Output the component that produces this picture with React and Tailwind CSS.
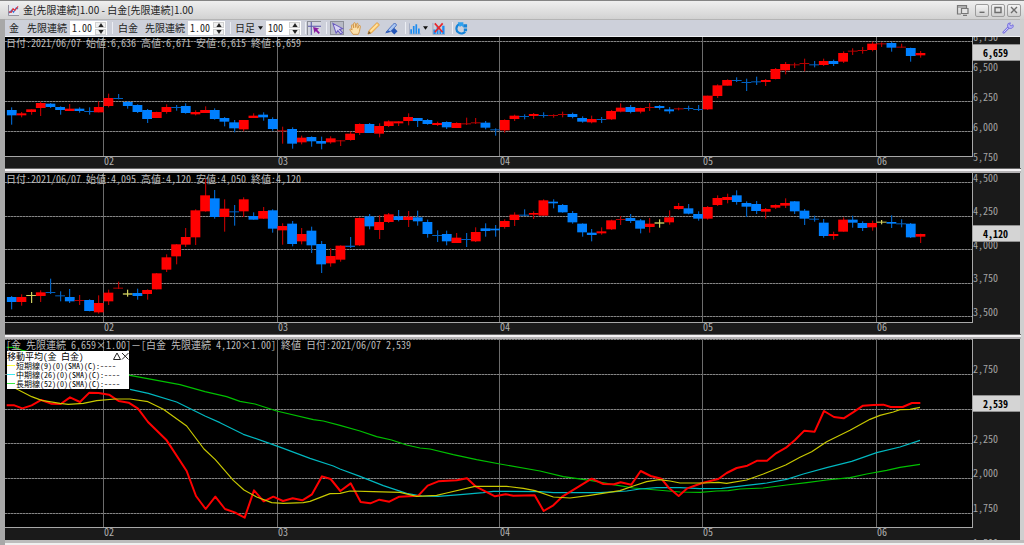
import { useState } from 'react';

const STEP = 29; // horizontal distance between two sessions, in thirds of a pixel
const FIRST = 35;

const months = [
  { label: '02', x: 103 },
  { label: '03', x: 277 },
  { label: '04', x: 499 },
  { label: '05', x: 702 },
  { label: '06', x: 876 },
];

// one session per entry: direction, high, body top, body bottom, low (thirds of a pixel)
const goldCandles = `d 220 228 244 272,u 234 238 244 250,u 226 226 234 242,u 203 207 222 246,d 207 209 219 222,
d 217 219 228 242,u 210 224 231 231,d 220 224 231 236,d 220 231 233 242,u 202 219 235 235,
u 179 192 216 220,d 180 192 194 196,d 201 204 216 224,d 211 213 234 237,d 225 228 255 267,
u 233 234 252 252,u 211 219 234 239,d 213 219 221 230,d 208 216 237 239,u 229 234 241 244,
u 217 228 237 237,d 223 228 255 257,d 249 252 263 277,d 258 265 283 295,u 258 258 286 292,
u 238 245 252 252,d 235 242 250 260,d 250 255 285 290,u 278 289 291 329,d 280 285 329 344,
u 305 311 325 331,d 307 309 322 338,d 308 321 329 346,u 307 313 325 329,u 318 319 321 336,
u 293 299 318 320,u 268 270 297 303,d 267 270 297 297,u 268 276 299 310,u 259 262 276 279,
u 262 262 268 276,u 238 249 261 274,d 252 252 261 279,d 255 258 270 272,u 263 267 273 276,
d 262 264 280 285,u 265 267 282 282,u 251 268 270 273,u 252 265 267 270,d 261 266 281 286,
d 283 286 289 305,u 256 258 289 296,u 242 245 255 261,d 241 246 248 256,u 237 240 246 255,
d 235 243 245 251,u 241 243 245 251,u 233 240 242 250,d 236 240 249 253,d 247 252 263 266,
u 245 255 265 268,d 249 255 258 267,u 228 231 256 258,u 208 221 233 235,d 213 219 234 238,
u 221 222 233 238,u 207 219 221 231,d 213 216 222 227,d 219 226 232 239,u 221 223 226 229,
d 215 222 224 230,d 213 225 227 231,u 185 185 226 228,u 151 154 186 192,u 136 138 155 155,
d 130 138 140 144,d 134 144 147 171,d 128 142 144 153,u 135 138 144 156,u 102 105 135 136,
u 84 90 109 121,u 86 91 93 102,u 74 87 90 112,d 81 91 93 100,u 74 81 93 96,
d 77 81 90 96,u 52 57 83 87,u 43 50 52 63,u 39 48 51 59,u 23 29 48 52,
u 25 28 31 39,d 24 27 41 53,u 29 38 40 41,d 41 42 66 83,u 51 57 64 71`;

const platinumCandles = `d 384 387 402 424,u 379 387 402 413,n 372 381 383 405,u 367 373 384 402,d 332 372 375 378,
d 370 382 385 400,d 363 387 400 405,u 381 396 399 411,d 394 396 429 430,u 382 405 433 437,
u 365 374 400 411,u 341 359 361 363,n 365 376 380 386,d 362 375 384 395,u 364 366 378 395,
u 315 316 364 364,u 259 268 305 312,u 228 229 265 289,u 180 207 230 237,u 124 127 208 231,
u 33 82 130 131,d 66 91 147 152,u 94 122 147 191,d 111 130 133 173,u 88 94 130 147,
d 133 144 155 155,u 117 129 152 153,d 124 127 182 194,u 166 174 187 230,d 159 167 228 235,
u 180 198 220 229,d 176 188 232 255,d 219 228 289 315,u 241 264 286 296,u 232 233 275 281,
d 207 233 237 240,u 148 150 232 234,d 138 145 175 184,u 142 162 186 213,u 135 139 162 165,
d 126 145 156 160,u 129 146 156 177,d 128 148 160 173,d 155 162 198 209,d 187 201 203 222,
d 188 198 220 232,u 195 209 225 225,d 195 213 215 237,u 178 192 220 222,d 166 181 189 206,
d 171 182 187 206,u 154 159 177 182,u 133 140 156 174,d 124 140 143 144,u 130 135 140 153,
u 94 97 143 143,d 94 101 106 121,d 108 111 133 134,d 129 135 163 167,d 166 167 193 206,
d 183 194 201 220,u 178 190 196 200,u 155 157 184 186,u 144 153 156 171,d 138 150 159 165,
d 153 157 182 196,u 150 167 177 194,n 154 163 167 179,u 127 148 163 170,u 105 114 123 125,
d 108 121 137 139,d 130 138 152 158,u 114 117 152 155,u 82 90 111 114,u 77 87 96 106,
d 67 82 102 110,d 100 105 116 147,d 99 108 129 138,u 120 123 131 152,u 109 111 119 123,
u 91 105 113 120,d 99 100 130 138,d 123 128 152 171,d 143 152 155 161,d 153 164 204 209,
u 191 198 204 215,u 148 155 191 191,d 143 155 164 179,d 160 165 180 189,u 158 165 178 188,
n 156 161 164 169,d 142 162 167 180,d 154 166 168 178,d 165 167 208 210,u 197 198 206 225`;

const spreadLines = [
  {
    color: '#00c000',
    width: 1.2,
    points:
      '20,40 45,40 67,49 390,124 540,152 615,173 680,188 720,202 765,210 830,231 940,257 970,261 1020,274 1080,291 1130,308 1175,318 1220,333 1260,342 1290,345 1360,362 1430,377 1500,390 1620,411 1690,428 1775,440 1840,452 1900,462 2040,474 2100,475 2150,471 2185,470 2220,465 2290,462 2360,453 2420,446 2480,438 2550,431 2600,420 2660,409 2700,400 2760,391',
  },
  {
    color: '#00b8c0',
    width: 1.2,
    points:
      '390,166 445,178 530,204 615,246 660,266 730,301 800,325 850,343 930,373 1000,396 1020,405 1080,427 1150,455 1220,478 1265,486 1315,487 1390,481 1450,476 1480,472 1620,473 1660,476 1800,476 1880,471 1920,465 1970,461 2040,461 2100,464 2165,463 2240,454 2300,447 2360,436 2410,420 2480,401 2555,382 2630,356 2700,339 2760,319',
  },
  {
    color: '#ff0000',
    width: 2,
    points:
      '20,214 43,214 67,223 95,214 124,198 153,209 182,210 210,190 240,204 268,176 296,177 327,182 356,201 386,206 414,224 444,264 500,319 560,411 588,486 617,525 646,488 675,525 704,535 734,551 762,469 791,502 820,488 849,501 878,493 907,499 936,481 966,427 992,435 1021,471 1052,448 1082,504 1111,508 1138,497 1168,503 1198,488 1255,485 1283,455 1315,442 1370,439 1401,433 1428,458 1485,487 1517,481 1540,485 1604,484 1631,531 1660,514 1688,487 1775,434 1810,450 1842,451 1862,445 1894,452 1922,411 1952,426 1984,434 2007,462 2036,486 2062,463 2090,453 2107,447 2155,435 2180,417 2210,402 2242,395 2272,380 2301,380 2328,358 2358,341 2385,318 2413,290 2444,293 2472,231 2502,249 2531,253 2558,236 2589,215 2620,213 2650,212 2672,219 2708,219 2736,207 2761,207',
  },
  {
    color: '#c8c800',
    width: 1.2,
    points:
      '30,154 50,165 95,188 125,199 180,208 205,211 250,208 290,200 345,195 390,195 444,203 490,226 560,276 612,345 646,377 700,439 732,468 770,489 815,506 850,508 910,506 930,502 990,479 1020,478 1050,471 1120,473 1200,475 1250,487 1310,484 1340,477 1425,457 1520,457 1570,463 1605,470 1660,489 1710,492 1770,484 1860,470 1900,456 1940,443 1978,437 2010,441 2040,447 2110,447 2155,445 2180,448 2240,438 2290,420 2357,393 2400,370 2435,353 2480,323 2550,289 2610,256 2640,244 2680,234 2700,227 2730,226 2760,220',
  },
];

const bodyColors = { u: '#ff0000', d: '#0080ff', n: '#e6e67a' };
const wickColors = { u: '#b40000', d: '#0060c0', n: '#d0d060' };

const mono = "font-['Noto_Sans_Mono_CJK_JP','Noto_Sans_CJK_JP',monospace]";

function Candles({ data, offset }) {
  return data.split(',').map((row, i) => {
    const [kind, ...rest] = row.trim().split(' ');
    const [high, top, bottom, low] = rest.map((v) => (Number(v) - offset) / 3);
    const cx = (FIRST + STEP * i) / 3;
    const thin = bottom - top < 1.4;
    const wickX = Math.floor(cx);
    return (
      <g key={i}>
        <rect x={wickX} y={high} width="1.2" height={Math.max(low - high, 1)} fill={wickColors[kind]} />
        <rect
          x={cx - 4.8}
          y={top}
          width="9.8"
          height={Math.max(bottom - top, 1)}
          fill={thin ? wickColors[kind] : bodyColors[kind]}
        />
      </g>
    );
  });
}

function ChartPanel({ title, svgHeight, sizeClass, stripClass, scale, current, children, overlay }) {
  // scale: top grid value and its y, pixels per 250
  const yOf = (value) => scale.y + ((scale.value - value) / 250) * scale.step;
  const values = Array.from({ length: scale.count }, (_, i) => scale.value - i * 250);
  // labels above the panel or behind the current price are left out
  const labels = values.filter((v) => yOf(v) > 2 && Math.abs(yOf(v) - 5 - yOf(current)) > 3);

  return (
    <section className="flex bg-[#1a1a1a]">
      <div className="min-w-0 flex-1">
        <div className="relative border-b border-r border-[#a8a8a8] bg-black">
          <svg viewBox={`5 0 967 ${svgHeight}`} preserveAspectRatio="none" className={`block w-full ${sizeClass}`}>
            {values.map((v) => (
              <g key={v} stroke="#4a4a4a">
                <path d={`M5 ${Math.floor(yOf(v)) + 0.5}H972`} />
                <path d={`M5 ${Math.floor(yOf(v)) + 0.5}H972`} stroke="#858585" strokeDasharray="2 1" />
              </g>
            ))}
            {months.map((m) => (
              <line key={m.label} x1={m.x + 0.5} x2={m.x + 0.5} y1="0" y2={svgHeight} stroke="#6c6c6c" />
            ))}
            {children}
          </svg>
          <h2 className="absolute left-px top-0 whitespace-pre text-[10px] leading-[12px] text-[#bdbdbd]">{title}</h2>
          {overlay}
        </div>
        <div className={`relative ${stripClass}`}>
          {months.map((m) => (
            <span
              key={m.label}
              className="absolute -top-px text-[10px] leading-[10px] text-[#b0b0b0]"
              style={{ left: `${((m.x - 4) / 968) * 100}%` }}
            >
              {m.label}
            </span>
          ))}
        </div>
      </div>
      <div className="relative w-[47px] overflow-hidden text-[10px] leading-[10px]">
        {labels.map((v) => (
          <span key={v} className="absolute left-0 text-[#a4a4a4]" style={{ top: Math.round(yOf(v)) - 10 }}>
            {v.toLocaleString('en-US')}
          </span>
        ))}
        <strong
          className="absolute left-0 w-full border-y border-[#909090] bg-[#d4d4d4] pl-[10px] leading-[15px] text-black"
          style={{ top: Math.round(yOf(current)) - 9 }}
        >
          {current.toLocaleString('en-US')}
        </strong>
      </div>
    </section>
  );
}

function Divider() {
  return (
    <div className="-mr-px">
      <div className="h-px bg-[#666]"></div>
      <div className="h-[2px] bg-[#f4f2f4]"></div>
      <div className="h-[2px] bg-[#b4b2b4]"></div>
    </div>
  );
}

function NumberBox({ label, value, step, onChange, widthClass }) {
  const change = (dir) => onChange((Number(value) + dir * step).toFixed(step < 1 ? 2 : 0));
  return (
    <div className="flex h-[14px] bg-white">
      <input
        aria-label={label}
        value={value}
        onChange={(e) => onChange(e.target.value)}
        className={`h-[13px] bg-white pl-[2px] text-[10px] leading-[13px] text-[#222] outline-none ${widthClass}`}
      />
      <div className="flex w-3 flex-col gap-px py-px pr-px">
        <button
          type="button"
          aria-label={`${label} +`}
          onClick={() => change(1)}
          className="flex flex-1 items-center justify-center border border-[#d0d0d0] bg-[#f0f0f0]"
        >
          <svg viewBox="0 0 6 4" className="h-[4px] w-[6px] shrink-0"><path d="M3 0 5.6 4H.4z" fill="#222" /></svg>
        </button>
        <button
          type="button"
          aria-label={`${label} -`}
          onClick={() => change(-1)}
          className="flex flex-1 items-center justify-center border border-[#d0d0d0] bg-[#f0f0f0]"
        >
          <svg viewBox="0 0 6 4" className="h-[4px] w-[6px] shrink-0"><path d="M3 4 .4 0h5.2z" fill="#222" /></svg>
        </button>
      </div>
    </div>
  );
}

function Separator() {
  return <div className="h-3 w-px bg-[#eceef4]"></div>;
}

function ToolButton({ label, pressed, children }) {
  return (
    <button
      type="button"
      aria-label={label}
      aria-pressed={pressed}
      className={`flex h-[14px] w-[14px] items-center justify-center ${
        pressed ? 'border border-[#8c8f98] bg-[#b8bbc6]' : ''
      }`}
    >
      <svg viewBox="0 0 14 14" className="h-[13px] w-[13px] shrink-0">{children}</svg>
    </button>
  );
}

function Toolbar() {
  const [goldRate, setGoldRate] = useState('1.00');
  const [platinumRate, setPlatinumRate] = useState('1.00');
  const [count, setCount] = useState('100');

  return (
    <div className="flex h-[17px] items-center border-t border-[#b4b4b4] bg-[#cdd0da] pl-1 pr-[6px] text-[10px] leading-none text-[#222]">
      <span>金</span>
      <span className="ml-2">先限連続</span>
      <div className="ml-[3px]">
        <NumberBox label="金 倍率" value={goldRate} step={0.01} onChange={setGoldRate} widthClass="w-[25px]" />
      </div>
      <div className="ml-[5px] mr-[5px]"><Separator /></div>
      <span>白金</span>
      <span className="ml-[7px]">先限連続</span>
      <div className="ml-[3px]">
        <NumberBox label="白金 倍率" value={platinumRate} step={0.01} onChange={setPlatinumRate} widthClass="w-[25px]" />
      </div>
      <div className="ml-[5px] mr-1"><Separator /></div>
      <button type="button" className="flex items-center gap-[3px]">
        日足
        <svg viewBox="0 0 6 4" className="h-[4px] w-[5px]"><path d="M0 0h6L3 4z" fill="#111" /></svg>
      </button>
      <div className="ml-[3px]">
        <NumberBox label="本数" value={count} step={1} onChange={setCount} widthClass="w-[23px]" />
      </div>
      <div className="ml-1 mr-px"><Separator /></div>
      <ToolButton label="十字カーソル" pressed>
        <path d="M0 0h14v14H0z" fill="#d4d6e0" />
        <path d="M3.500 0v14M0 4.500h14" stroke="#5454a8" strokeWidth="1.100" />
        <path d="M5.500 5.500 12 7l-2.200 1.400 3 3.200-1.300 1.300-3.200-3.100L7 12z" fill="#8a1aa0" />
      </ToolButton>
      <div className="ml-[5px] mr-[3px]"><Separator /></div>
      <ToolButton label="選択" pressed>
        <path d="M2 1.500 12.500 7 9.200 8 12.500 11.500 10.500 13 7.400 9.300 5.500 12z" fill="#d9d4f4" stroke="#6a5cc0" strokeWidth="1.100" />
      </ToolButton>
      <div className="ml-1">
        <ToolButton label="移動">
          <path
            d="M4.300 13.300C3.300 11.300 1.600 10 .8 8.400c0-1.200 1.600-1 2.500.3L2.600 3.800c.1-1.300 1.500-1.200 1.800 0l.7 2.500-.2-4.600C5.100.5 6.600.5 6.900 1.700l.4 4.300.8-4c.4-1.100 1.700-.8 1.700.4L9.400 6.800l1.400-2.700c.7-.8 1.800-.2 1.500.9l-1.100 5.200c-.3 1.300-.8 2.200-1.200 3.100z"
            fill="#fbe0ac"
            stroke="#cf8e3c"
            strokeWidth=".9"
          />
        </ToolButton>
      </div>
      <div className="ml-1">
        <ToolButton label="鉛筆">
          <path d="M1 13 2.200 9.200 10.200 1.200C11.300.4 13.600 2.400 12.800 3.800L4.800 11.800z" fill="#ffd27a" stroke="#e08f2a" strokeWidth=".9" />
          <path d="M1 13 2 9.800 4.300 12z" fill="#6e5a3c" />
          <path d="M4 9.500 11 2.600" stroke="#fff0c4" />
        </ToolButton>
      </div>
      <div className="ml-1">
        <ToolButton label="ペン">
          <path d="M1 11 8.600 2.600C10 .8 13 1.600 12 4L5.600 10.500z" fill="#a9c6f2" stroke="#3a62b8" strokeWidth=".9" />
          <path d="M0 12.500 4 9l1.500 1.500zM10 6.500l3.500 3.500-3.500 3.500L6.500 10z" fill="#2456b8" />
        </ToolButton>
      </div>
      <div className="ml-[7px] mr-[3px]"><Separator /></div>
      <button type="button" aria-label="指標" className="flex items-center gap-[2px]">
        <svg viewBox="0 0 14 14" className="h-[13px] w-3">
          <path d="M.5 1v12.500H14" fill="none" stroke="#9aa6c0" />
          <path d="M1.500 8h2v5h-2zM4.500 4h2v9h-2zM7.500 2h2v11h-2zM10.500 7h2v6h-2z" fill="#1e8cf0" />
        </svg>
        <svg viewBox="0 0 6 4" className="h-[4px] w-[5px]"><path d="M0 0h6L3 4z" fill="#111" /></svg>
      </button>
      <div className="ml-[3px]">
        <ToolButton label="指標削除">
          <path d="M1 1v12.500H14" fill="none" stroke="#9aa6c0" />
          <path d="M1.500 8h2.500v5H1.500zM5 5h2v8H5zM8 9h2v4H8zM11 4h2.500v9H11z" fill="#1e8cf0" />
          <path d="M3 1.500 11.500 11M11.500 1.500 3 11" stroke="#e8262c" strokeWidth="1.800" />
        </ToolButton>
      </div>
      <div className="ml-[7px] mr-px"><Separator /></div>
      <ToolButton label="更新">
        <path d="M5.500 2.200C.8 3.200.2 9.500 4 11.500c2.500 1.500 5.500.8 7-1" fill="none" stroke="#1583d8" strokeWidth="2.300" />
        <path d="M3 .2h6v5.500L7 4 5.200 5.500z" fill="#2ea0ee" />
        <path d="M9 2.500h4V6H9zM9.500 7H13v3H9.500z" fill="#1583d8" />
      </ToolButton>
      <button type="button" aria-label="設定" className="ml-auto">
        <svg viewBox="0 0 14 14" className="h-3 w-3">
          <path d="M2 12 8 6" stroke="#7b74e0" strokeWidth="3" strokeLinecap="round" />
          <path d="M2.300 11.700 7.500 6.500" stroke="#dcdcff" strokeWidth="1" strokeLinecap="round" />
          <path d="M12.800 3.200A3.300 3.300 0 1 1 9.800 1L9 3.300l1.500 1.500z" fill="#b9b6f6" stroke="#6f68dc" strokeWidth="1" />
        </svg>
      </button>
    </div>
  );
}

function WindowButton({ label, children }) {
  return (
    <button
      type="button"
      aria-label={label}
      className="flex h-[13px] w-[14px] items-center justify-center rounded-xs border border-[#9c9c9c] bg-linear-to-b from-[#f4f4f4] to-[#cfcfcf]"
    >
      <svg viewBox="0 0 8 8" className="h-2 w-2" fill="none" stroke="#6c6c6c" strokeWidth="1.400">{children}</svg>
    </button>
  );
}

function TitleBar() {
  return (
    <header className="flex h-[19px] items-center border-t border-[#848484] bg-linear-to-b from-[#efefef] to-[#d2d2d2] pl-2 pr-[3px]">
      <svg viewBox="0 0 12 12" className="h-[11px] w-[11px]">
        <rect width="12" height="12" fill="#e4e6ee" />
        <path d="M.5 0v11.500H12" fill="none" stroke="#8a8a96" />
        <path d="M1 9 4 5.500 6 8l3-5 2 1.500" fill="none" stroke="#3878d8" strokeWidth="1.200" />
        <path d="M1 7.500 3.500 8 5.500 4l2 2L11 1.500" fill="none" stroke="#e03038" strokeWidth="1.200" />
      </svg>
      <h1 className="ml-1 text-[10px] leading-none text-[#222] font-['Noto_Sans_CJK_JP',sans-serif]">
        金[先限連続]1.00 - 白金[先限連続]1.00
      </h1>
      <div className="ml-auto flex items-center gap-[2px]">
        <button type="button" aria-label="別ウィンドウ" className="mr-1">
          <svg viewBox="0 0 13 12" className="h-3 w-[13px]" fill="none" stroke="#777" strokeWidth="1.200">
            <path d="M5 10H1.500V1.500h9V4M1.500 3h9" />
            <path d="M5.500 4.500h6.500v5H5.500zM7 11.300h4" fill="#e4e4e4" />
          </svg>
        </button>
        <WindowButton label="最小化"><path d="M1.500 6.300h5" /></WindowButton>
        <WindowButton label="最大化"><path d="M1 1.500h6v5H1z" /></WindowButton>
        <WindowButton label="閉じる"><path d="M1 1l6 6M7 1 1 7" /></WindowButton>
      </div>
    </header>
  );
}

function Legend() {
  const rows = [
    { text: '短期線(9)(0)(SMA)(C):----', color: 'bg-[#ffff40]' },
    { text: '中期線(26)(0)(SMA)(C):----', color: 'bg-[#40e8f0]' },
    { text: '長期線(52)(0)(SMA)(C):----', color: 'bg-[#40e840]' },
  ];
  return (
    <div className="absolute left-[2px] top-3 w-[122px] bg-white pb-px text-[8px] font-medium leading-[9px] text-black">
      <div className="flex h-[10px] items-center justify-between">
        <span className="whitespace-pre text-[9px]">移動平均(金 白金)</span>
        <span className="flex">
          <button type="button" aria-label="たたむ">
            <svg viewBox="0 0 8 8" className="h-2 w-2" fill="none" stroke="#222"><path d="M4 1 7.500 7.500h-7z" /></svg>
          </button>
          <button type="button" aria-label="消す">
            <svg viewBox="0 0 8 8" className="h-2 w-2" stroke="#222"><path d="M1 1l6.500 6.500M7.500 1 1 7.500" /></svg>
          </button>
        </span>
      </div>
      {rows.map((row) => (
        <div key={row.text} className="flex items-center gap-px whitespace-nowrap">
          <i className={`h-px w-2 ${row.color}`}></i>
          {row.text}
        </div>
      ))}
    </div>
  );
}

export default function App() {
  return (
    <div className={`flex min-h-screen w-full flex-col bg-[#d0d0d0] ${mono}`}>
      <TitleBar />
      <main className="flex-1 border-l-[5px] border-r-[4px] border-l-[#a8a8a8] border-r-[#cfcfcf]">
        <Toolbar />
        <div className="h-px bg-[#eef0f4]"></div>

        <ChartPanel
          title="日付:2021/06/07 始値:6,636 高値:6,671 安値:6,615 終値:6,659"
          svgHeight={119}
          sizeClass="h-[119px]"
          stripClass="h-[11px]"
          scale={{ value: 6750, y: 4.7, step: 30, count: 5 }}
          current={6659}
        >
          <Candles data={goldCandles} offset={9} />
        </ChartPanel>
        <Divider />

        <ChartPanel
          title="日付:2021/06/07 始値:4,095 高値:4,120 安値:4,050 終値:4,120"
          svgHeight={149}
          sizeClass="h-[149px]"
          stripClass="h-[11px]"
          scale={{ value: 4500, y: 9.7, step: 33.5, count: 5 }}
          current={4120}
        >
          <Candles data={platinumCandles} offset={15} />
        </ChartPanel>
        <Divider />

        <ChartPanel
          title="[金 先限連続 6,659×1.00]－[白金 先限連続 4,120×1.00] 終値 日付:2021/06/07 2,539"
          svgHeight={188}
          sizeClass="h-[188px]"
          stripClass="h-3"
          scale={{ value: 3000, y: 0.7, step: 34.67, count: 7 }}
          current={2539}
          overlay={<Legend />}
        >
          {spreadLines.map((line) => (
            <polyline
              key={line.color}
              points={line.points}
              transform="translate(0 -5) scale(0.33333)"
              vectorEffect="non-scaling-stroke"
              fill="none"
              stroke={line.color}
              strokeWidth={line.width}
              strokeLinejoin="round"
            />
          ))}
        </ChartPanel>
        <div className="-mr-[4px] h-[3px] bg-[#bcbcbc]"></div>
        <div className="-mr-[4px] h-[2px] bg-[#f0f0f0]"></div>
      </main>
    </div>
  );
}
